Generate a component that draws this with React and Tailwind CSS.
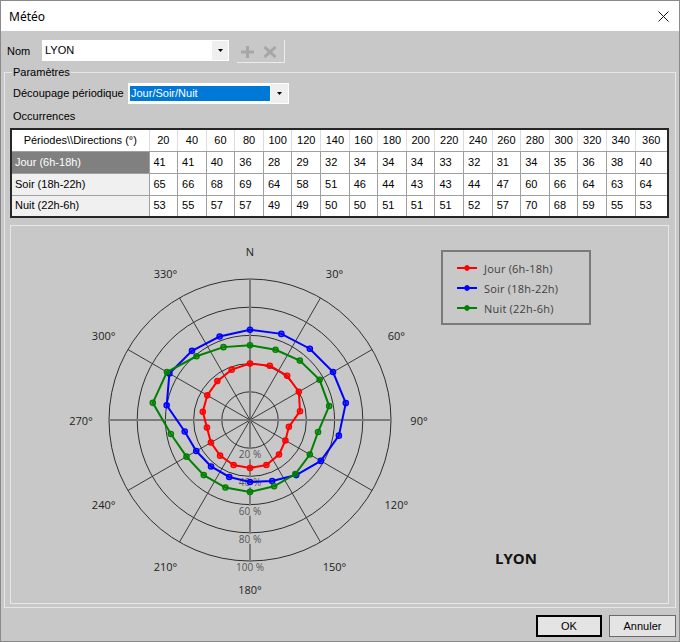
import React from 'react';

const DIRS = [20, 40, 60, 80, 100, 120, 140, 160, 180, 200, 220, 240, 260, 280, 300, 320, 340, 360];
const SERIES = [
  { name: 'Jour (6h-18h)', color: '#ff0000', vals: [41, 41, 40, 36, 28, 29, 32, 34, 34, 34, 33, 32, 31, 34, 35, 36, 38, 40] },
  { name: 'Soir (18h-22h)', color: '#0000ff', vals: [65, 66, 68, 69, 64, 58, 51, 46, 44, 43, 43, 44, 47, 60, 66, 64, 63, 64] },
  { name: 'Nuit (22h-6h)', color: '#008000', vals: [53, 55, 57, 57, 49, 49, 50, 50, 51, 51, 51, 52, 57, 70, 68, 59, 55, 53] },
];

function Arrow() {
  return (
    <svg width="5" height="3" viewBox="0 0 5 3">
      <path d="M0 0H5L2.5 3Z" fill="#000" />
    </svg>
  );
}

function Chart() {
  const cx = 250, cy = 421, k = 1.41;
  const rad = (a) => (a * Math.PI) / 180;
  const P = (a, r) => [cx + r * Math.sin(rad(a)), cy - r * Math.cos(rad(a))];
  const angles = Array.from({ length: 12 }, (_, i) => i * 30);
  const degLabels = [
    [0, 'N'], [30, '30°'], [60, '60°'], [90, '90°'], [120, '120°'], [150, '150°'],
    [180, '180°'], [210, '210°'], [240, '240°'], [270, '270°'], [300, '300°'], [330, '330°'],
  ];
  return (
    <svg width="657" height="377" viewBox="11 227 657 377" className="block">
      {[20, 40, 60, 80, 100].map((p) => (
        <circle key={p} cx={cx} cy={cy} r={k * p} fill="none" stroke="#2e2e2e" strokeWidth="1" />
      ))}
      {angles.map((a) => {
        const [x, y] = P(a, k * 100);
        const axis = a % 90 === 0;
        return (
          <line key={a} x1={cx} y1={cy} x2={x} y2={y} stroke={axis ? '#7c7c7c' : '#3a3a3a'} strokeWidth={axis ? 2 : 1} />
        );
      })}
      {[20, 40, 60, 80, 100].map((p) => {
        const t = `${p} %`;
        const w = t.length * 5.6;
        const y = cy + k * p + 6;
        return (
          <g key={p}>
            <rect x={cx - w / 2} y={y - 5} width={w} height={10} fill="#c8c8c8" />
            <text x={cx} y={y} textAnchor="middle" dominantBaseline="central" fontSize="10" fill="#555" fontFamily="'Open Sans', sans-serif">{t}</text>
          </g>
        );
      })}
      {degLabels.map(([a, t]) => {
        const [x, y] = P(a, 169);
        return (
          <text key={a} x={x} y={y} textAnchor="middle" dominantBaseline="central" fontSize="11" fill="#222" fontFamily="'Open Sans', sans-serif">{t}</text>
        );
      })}
      {SERIES.map((s) => {
        const pts = DIRS.map((d, i) => P(d, k * s.vals[i]));
        return (
          <g key={s.name}>
            <polygon points={pts.map((p) => p.join(',')).join(' ')} fill="none" stroke={s.color} strokeWidth="2" />
            {pts.map(([x, y], i) => (
              <circle key={i} cx={x} cy={y} r="2.6" fill={s.color} fillOpacity="0.55" stroke={s.color} strokeWidth="1.4" />
            ))}
          </g>
        );
      })}
      <rect x="442" y="252" width="148" height="73" fill="none" stroke="#7a7a7a" strokeWidth="2" />
      {SERIES.map((s, i) => {
        const y = 269 + i * 20;
        return (
          <g key={s.name}>
            <line x1="457" y1={y} x2="477" y2={y} stroke={s.color} strokeWidth="2" />
            <circle cx="467" cy={y} r="2.4" fill={s.color} stroke={s.color} strokeWidth="1" />
            <text x="484" y={y} dominantBaseline="central" fontSize="11" fill="#404040" letterSpacing="0.2" fontFamily="'Open Sans', sans-serif">{s.name}</text>
          </g>
        );
      })}
      <text x="516" y="559" textAnchor="middle" dominantBaseline="central" fontSize="15" fontWeight="bold" fill="#111" fontFamily="'Open Sans', sans-serif">LYON</text>
    </svg>
  );
}

export default function App() {
  return (
    <div className="w-[680px] h-[642px] border border-[#8a8a8a] bg-[#c8c8c8] flex flex-col font-['Liberation_Sans',Arial,sans-serif] text-[11px] text-black leading-[13px]">
      {/* Title bar */}
      <div className="h-[30px] shrink-0 bg-white flex items-center justify-between pl-[8px] pr-[10px] font-['Noto_Sans',sans-serif] text-[12px]">
        <span>Météo</span>
        <svg width="11" height="11" viewBox="0 0 11 11">
          <path d="M0.5 0.5L10.5 10.5M10.5 0.5L0.5 10.5" stroke="#111" strokeWidth="1" />
        </svg>
      </div>

      {/* Nom row */}
      <div className="flex items-center h-[23px] mt-[9px] ml-[6px]">
        <span className="w-[35px]">Nom</span>
        <div className="self-start flex h-[21px] w-[187px] bg-white">
          <div className="flex-1 flex items-center pl-[3px]">LYON</div>
          <div className="w-[16px] my-[1px] mr-[1px] bg-[#efefef] flex items-center justify-center">
            <Arrow />
          </div>
        </div>
        <div className="ml-[8px] w-[48px] h-[23px] border-r border-b border-[#ececec] flex items-center gap-[9px] pl-[4px] pt-[1px]">
          <svg width="13" height="12" viewBox="0 0 13 12">
            <rect x="0" y="4.5" width="13" height="3" fill="#a6a6a6" />
            <rect x="5" y="0" width="3" height="12" fill="#a6a6a6" />
          </svg>
          <svg width="14" height="12" viewBox="0 0 14 12">
            <path d="M1.5 1L12.5 11M12.5 1L1.5 11" stroke="#a6a6a6" strokeWidth="3" />
          </svg>
        </div>
      </div>

      {/* Paramètres group */}
      <fieldset className="mx-[3px] mt-[3px] border border-[#e6e6e6] pb-[3px]">
        <legend className="ml-[7px] px-[1px] leading-[13px]">Paramètres</legend>
        <div className="px-[5px]">
          <div className="flex items-center mt-[4px] ml-[3px] h-[21px]">
            <span className="w-[115px]">Découpage périodique</span>
            <div className="flex h-[21px] w-[161px] bg-white">
              <div className="flex-1 my-[3px] ml-[2px] mr-[1px] bg-[#0078d7] text-white flex items-center pl-[1px]">Jour/Soir/Nuit</div>
              <div className="w-[17px] my-[1px] mr-[1px] bg-[#efefef] flex items-center justify-center">
                <Arrow />
              </div>
            </div>
          </div>
          <div className="ml-[3px] mt-[6px] h-[13px]">Occurrences</div>
          <table className="mt-[5px] w-[659px] border-collapse table-fixed border-2 border-[#262626]">
            <colgroup>
              <col className="w-[138px]" />
              {DIRS.slice(0, 17).map((d) => (
                <col key={d} className="w-[28.6px]" />
              ))}
              <col />
            </colgroup>
            <thead>
              <tr className="h-[22px] bg-white">
                <th className="font-normal text-center border-b border-r border-b-[#a0a0a0] border-r-[#dcdcdc] p-0">{'Périodes\\\\Directions (°)'}</th>
                {DIRS.map((d) => (
                  <th key={d} className="font-normal text-center border-b border-r border-b-[#a0a0a0] border-r-[#dcdcdc] p-0">{d}</th>
                ))}
              </tr>
            </thead>
            <tbody>
              {SERIES.map((s, ri) => (
                <tr key={s.name} className="h-[22px]">
                  <td className={ri === 0 ? 'bg-[#808080] text-white pl-[3px] border border-[#a0a0a0] whitespace-nowrap' : 'bg-[#f0f0f0] pl-[3px] border border-[#a0a0a0] whitespace-nowrap'}>{s.name}</td>
                  {s.vals.map((v, i) => (
                    <td key={i} className="bg-white pl-[4px] border border-[#a0a0a0]">{v}</td>
                  ))}
                </tr>
              ))}
            </tbody>
          </table>
          <div className="mt-[7px] w-[659px] h-[379px] border border-[#e8e8e8]">
            <Chart />
          </div>
        </div>
      </fieldset>

      {/* Buttons */}
      <div className="mt-auto mb-[4px] flex justify-end gap-[7px] mr-[3px]">
        <button className="w-[66px] h-[22px] border-2 border-black bg-[#e4e4e4] text-[11px]">OK</button>
        <button className="w-[67px] h-[22px] border border-[#6a6a6a] bg-[#e4e4e4] text-[11px]">Annuler</button>
      </div>
    </div>
  );
}
